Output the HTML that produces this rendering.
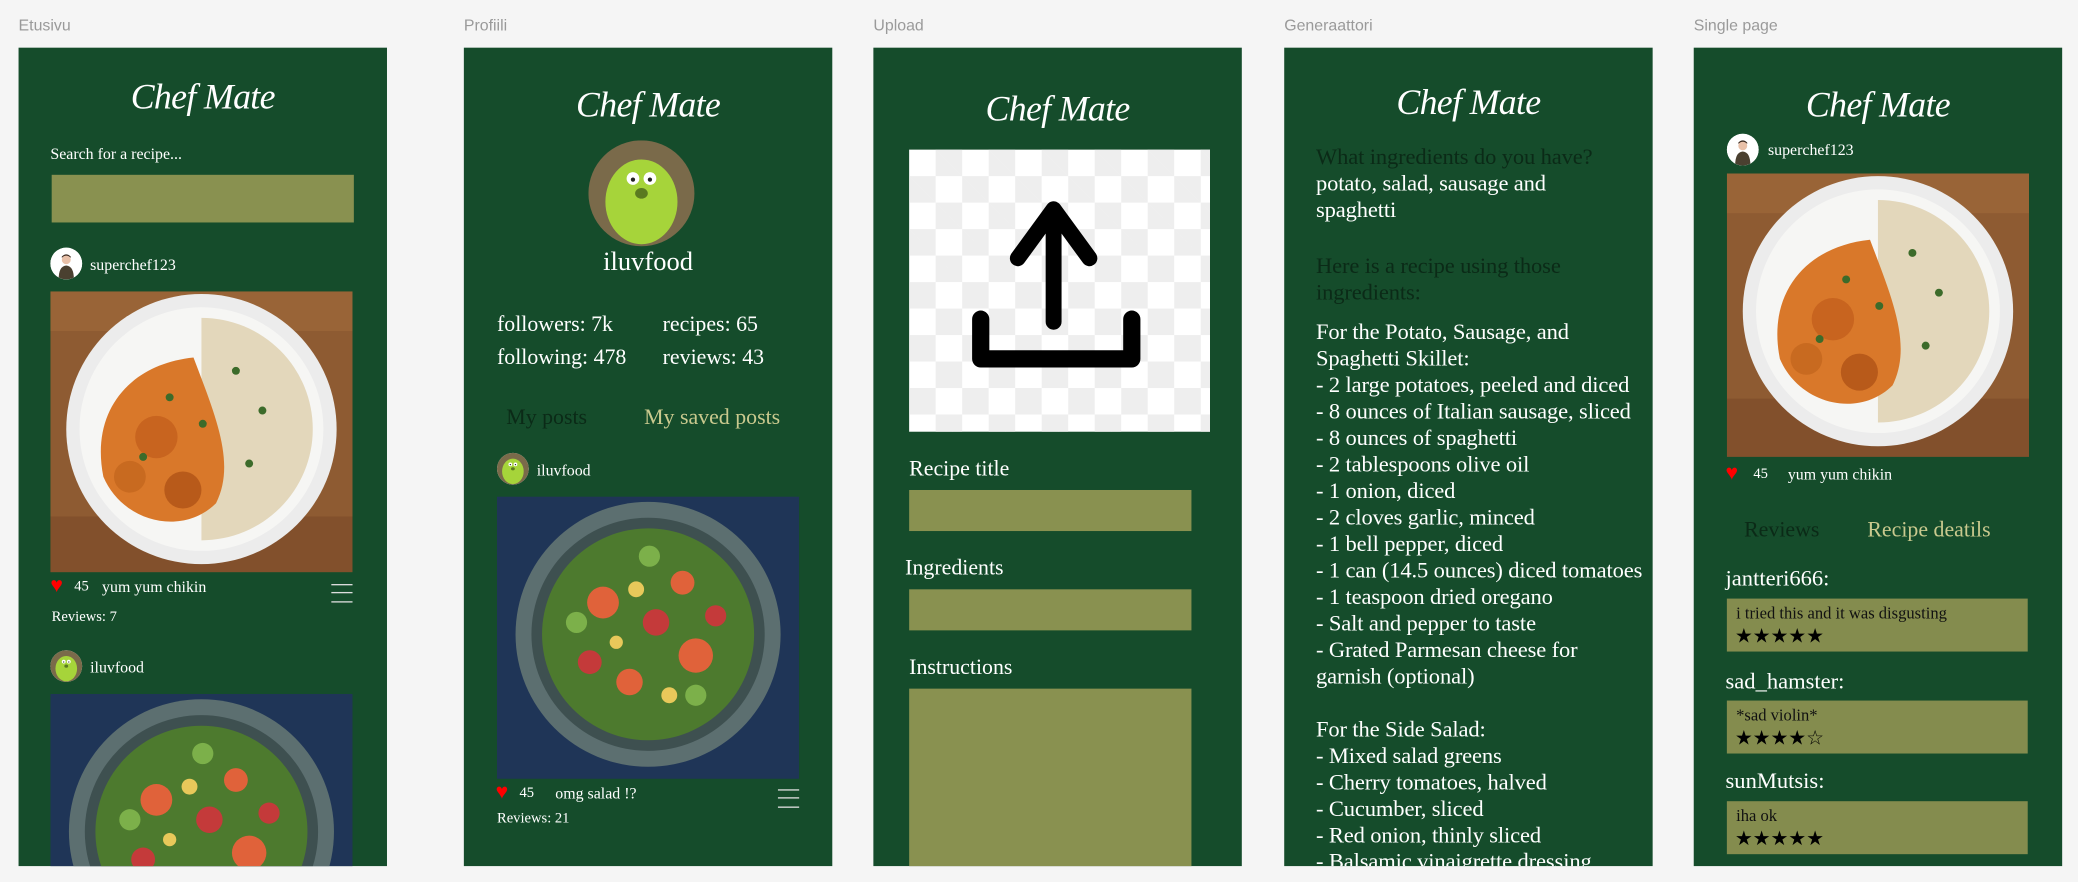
<!DOCTYPE html>
<html><head><meta charset="utf-8"><style>
html,body{margin:0;padding:0;background:#f5f5f5;width:2078px;height:882px;overflow:hidden}
#s{position:absolute;left:0;top:0;width:1568px;height:666px;transform:scale(1.3253,1.3243);transform-origin:0 0;font-family:"Liberation Serif","DejaVu Serif",serif;overflow:hidden}
.lbl{position:absolute;top:12px;font:12px "Liberation Sans",sans-serif;color:#9a9a9a}
.fr{position:absolute;top:36px;width:278px;height:618px;background:#154c2b;overflow:hidden}
.t{position:absolute;white-space:nowrap;line-height:1;color:#fff}
.m{font-size:16.5px}
.logo{position:absolute;left:0;width:278px;text-align:center;font-style:italic;font-size:27px;color:#fff;line-height:1;font-family:"Liberation Serif",serif;letter-spacing:-0.5px}
.box{position:absolute;background:#899150}
.dk{color:#0b2a17}
.tan{color:#c9c98e}
.av{position:absolute;width:24px;height:24px;border-radius:50%;background:#fff;overflow:hidden}
.ham{position:absolute;width:16px;height:12px;border-top:1px solid #ddd;border-bottom:1px solid #ddd}
.ham:after{content:"";position:absolute;left:0;right:0;top:5px;border-top:1px solid #ddd}
.heart{position:absolute;color:#f00;font-size:16px;line-height:1}
</style></head><body><div id="s">
<div class="lbl" style="left:14px">Etusivu</div>
<div class="lbl" style="left:350px">Profiili</div>
<div class="lbl" style="left:659px">Upload</div>
<div class="lbl" style="left:969px">Generaattori</div>
<div class="lbl" style="left:1278px">Single page</div>

<svg width="0" height="0" style="position:absolute"><defs>
<g id="chicken">
<rect width="228" height="214" fill="#8e5b32"/>
<rect y="0" width="228" height="30" fill="#a06a3a" opacity=".6"/>
<rect y="170" width="228" height="44" fill="#7a4a28" opacity=".6"/>
<circle cx="114" cy="104" r="102" fill="#ececec"/>
<circle cx="114" cy="104" r="92" fill="#f6f6f4"/>
<path d="M114 20 A84 84 0 0 1 114 188 Z" fill="#e3d7bb"/>
<path d="M108 50 C60 55 30 90 40 140 C55 175 100 185 125 160 C140 130 125 95 108 50Z" fill="#d9782a"/>
<circle cx="80" cy="110" r="16" fill="#c8641f"/><circle cx="100" cy="150" r="14" fill="#b85a1a"/><circle cx="60" cy="140" r="12" fill="#c86a20"/>
<g fill="#3c6b2a"><circle cx="90" cy="80" r="3"/><circle cx="140" cy="60" r="3"/><circle cx="160" cy="90" r="3"/><circle cx="70" cy="125" r="3"/><circle cx="150" cy="130" r="3"/><circle cx="115" cy="100" r="3"/></g>
</g>
<g id="salad">
<rect width="228" height="214" fill="#1f3557"/>
<circle cx="114" cy="104" r="100" fill="#5c6f70"/>
<circle cx="114" cy="104" r="88" fill="#3e5050"/>
<circle cx="114" cy="104" r="80" fill="#4d7a2e"/>
<g fill="#e0623a"><circle cx="80" cy="80" r="12"/><circle cx="150" cy="120" r="13"/><circle cx="100" cy="140" r="10"/><circle cx="140" cy="65" r="9"/></g>
<g fill="#c43a3a"><circle cx="120" cy="95" r="10"/><circle cx="70" cy="125" r="9"/><circle cx="165" cy="90" r="8"/></g>
<g fill="#e8c85a"><circle cx="105" cy="70" r="6"/><circle cx="130" cy="150" r="6"/><circle cx="90" cy="110" r="5"/></g>
<g fill="#7cb04a"><circle cx="60" cy="95" r="8"/><circle cx="150" cy="150" r="8"/><circle cx="115" cy="45" r="8"/></g>
</g>
<g id="green"><rect width="100" height="100" fill="#7a6a4a"/><ellipse cx="50" cy="58" rx="34" ry="40" fill="#a6d43a"/><circle cx="42" cy="36" r="6" fill="#fff"/><circle cx="58" cy="36" r="6" fill="#fff"/><circle cx="42" cy="37" r="2" fill="#222"/><circle cx="58" cy="37" r="2" fill="#222"/><ellipse cx="50" cy="50" rx="6" ry="5" fill="#5a7a20"/></g>
<g id="chef"><rect width="100" height="100" fill="#fff"/><circle cx="50" cy="38" r="14" fill="#e8c0a8"/><path d="M36 32 Q50 18 64 32 L64 28 Q50 14 36 28Z" fill="#3a2a20"/><path d="M26 100 Q26 58 50 56 Q74 58 74 100Z" fill="#4a4030"/></g>
</defs></svg>

<!-- Frame 1 -->
<div class="fr" style="left:14px">
<div class="logo" style="top:24px">Chef Mate</div>
<div class="t" style="left:24px;top:74px;font-size:12px">Search for a recipe...</div>
<div class="box" style="left:25px;top:96px;width:228px;height:36px"></div>
<svg class="av" style="left:24px;top:151px" viewBox="0 0 100 100"><use href="#chef"/></svg>
<div class="t" style="left:54px;top:158px;font-size:12px">superchef123</div>
<svg style="position:absolute;left:24px;top:184px" width="228" height="212"><use href="#chicken"/></svg>
<div class="heart" style="left:24px;top:399px">♥</div>
<div class="t" style="left:42px;top:402px;font-size:11px">45</div>
<div class="t" style="left:63px;top:401px;font-size:12px">yum yum chikin</div>
<div class="ham" style="left:236px;top:405px"></div>
<div class="t" style="left:25px;top:425px;font-size:11px">Reviews: 7</div>
<svg class="av" style="left:24px;top:455px" viewBox="0 0 100 100"><use href="#green"/></svg>
<div class="t" style="left:54px;top:462px;font-size:12px">iluvfood</div>
<svg style="position:absolute;left:24px;top:488px" width="228" height="214"><use href="#salad"/></svg>
</div>

<!-- Frame 2 -->
<div class="fr" style="left:350px">
<div class="logo" style="top:30px">Chef Mate</div>
<svg style="position:absolute;left:94px;top:70px;border-radius:50%" width="80" height="80" viewBox="0 0 100 100"><use href="#green"/></svg>
<div class="t" style="left:0;width:278px;text-align:center;top:152px;font-size:20px">iluvfood</div>
<div class="t m" style="left:25px;top:201px">followers: 7k</div>
<div class="t m" style="left:150px;top:201px">recipes: 65</div>
<div class="t m" style="left:25px;top:226px">following: 478</div>
<div class="t m" style="left:150px;top:226px">reviews: 43</div>
<div class="t dk m" style="left:32px;top:271px">My posts</div>
<div class="t tan m" style="left:136px;top:271px">My saved posts</div>
<svg class="av" style="left:25px;top:306px" viewBox="0 0 100 100"><use href="#green"/></svg>
<div class="t" style="left:55px;top:313px;font-size:12px">iluvfood</div>
<svg style="position:absolute;left:25px;top:339px" width="228" height="213"><use href="#salad"/></svg>
<div class="heart" style="left:24px;top:555px">♥</div>
<div class="t" style="left:42px;top:558px;font-size:11px">45</div>
<div class="t" style="left:69px;top:557px;font-size:12px">omg salad !?</div>
<div class="ham" style="left:237px;top:560px"></div>
<div class="t" style="left:25px;top:577px;font-size:11px">Reviews: 21</div>
</div>

<!-- Frame 3 -->
<div class="fr" style="left:659px">
<div class="logo" style="top:33px">Chef Mate</div>
<div style="position:absolute;left:27px;top:77px;width:227px;height:213px;background-color:#fff;background-image:linear-gradient(45deg,#eee 25%,transparent 25%,transparent 75%,#eee 75%),linear-gradient(45deg,#eee 25%,transparent 25%,transparent 75%,#eee 75%);background-size:40px 40px;background-position:0 0,20px 20px"></div>
<svg style="position:absolute;left:27px;top:77px" width="227" height="213">
<path d="M109 130 L109 48 M82 82 L109 45 L136 82" stroke="#000" stroke-width="12" stroke-linecap="round" stroke-linejoin="round" fill="none"/>
<path d="M54 128 L54 158 L168 158 L168 128" stroke="#000" stroke-width="13" stroke-linecap="round" stroke-linejoin="round" fill="none"/>
</svg>
<div class="t m" style="left:27px;top:310px">Recipe title</div>
<div class="box" style="left:27px;top:334px;width:213px;height:31px"></div>
<div class="t m" style="left:24px;top:385px">Ingredients</div>
<div class="box" style="left:27px;top:409px;width:213px;height:31px"></div>
<div class="t m" style="left:27px;top:460px">Instructions</div>
<div class="box" style="left:27px;top:484px;width:213px;height:140px"></div>
</div>

<!-- Frame 4 -->
<div class="fr" style="left:969px">
<div class="logo" style="top:28px">Chef Mate</div>
<div class="t" style="left:24px;top:73px;font-size:17px;line-height:20px;white-space:pre;letter-spacing:-0.1px"><span class="dk">What ingredients do you have?</span>
potato, salad, sausage and
spaghetti
<span style="display:block;height:22px"></span><span class="dk">Here is a recipe using those
ingredients:</span>
<span style="display:block;height:10px"></span>For the Potato, Sausage, and
Spaghetti Skillet:
- 2 large potatoes, peeled and diced
- 8 ounces of Italian sausage, sliced
- 8 ounces of spaghetti
- 2 tablespoons olive oil
- 1 onion, diced
- 2 cloves garlic, minced
- 1 bell pepper, diced
- 1 can (14.5 ounces) diced tomatoes
- 1 teaspoon dried oregano
- Salt and pepper to taste
- Grated Parmesan cheese for
garnish (optional)

For the Side Salad:
- Mixed salad greens
- Cherry tomatoes, halved
- Cucumber, sliced
- Red onion, thinly sliced
- Balsamic vinaigrette dressing</div>
</div>

<!-- Frame 5 -->
<div class="fr" style="left:1278px">
<div class="logo" style="top:30px">Chef Mate</div>
<svg class="av" style="left:25px;top:65px" viewBox="0 0 100 100"><use href="#chef"/></svg>
<div class="t" style="left:56px;top:71px;font-size:12px">superchef123</div>
<svg style="position:absolute;left:25px;top:95px" width="228" height="214"><use href="#chicken"/></svg>
<div class="heart" style="left:24px;top:314px">♥</div>
<div class="t" style="left:45px;top:317px;font-size:11px">45</div>
<div class="t" style="left:71px;top:316px;font-size:12px">yum yum chikin</div>
<div class="t dk m" style="left:38px;top:356px">Reviews</div>
<div class="t tan m" style="left:131px;top:356px">Recipe deatils</div>
<div class="t" style="left:24px;top:392px;font-size:17px">jantteri666:</div>
<div class="box" style="left:25px;top:416px;width:227px;height:40px;background:#848c4e"></div>
<div class="t" style="left:32px;top:421px;font-size:12.5px;color:#111">i tried this and it was disgusting</div>
<div class="t" style="left:31px;top:438px;font-size:15px;color:#000">★★★★★</div>
<div class="t" style="left:24px;top:470px;font-size:17px">sad_hamster:</div>
<div class="box" style="left:25px;top:493px;width:227px;height:40px;background:#848c4e"></div>
<div class="t" style="left:32px;top:498px;font-size:12.5px;color:#111">*sad violin*</div>
<div class="t" style="left:31px;top:515px;font-size:15px;color:#000">★★★★☆</div>
<div class="t" style="left:24px;top:545px;font-size:17px">sunMutsis:</div>
<div class="box" style="left:25px;top:569px;width:227px;height:40px;background:#848c4e"></div>
<div class="t" style="left:32px;top:574px;font-size:12.5px;color:#111">iha ok</div>
<div class="t" style="left:31px;top:591px;font-size:15px;color:#000">★★★★★</div>
</div>
</div></body></html>
